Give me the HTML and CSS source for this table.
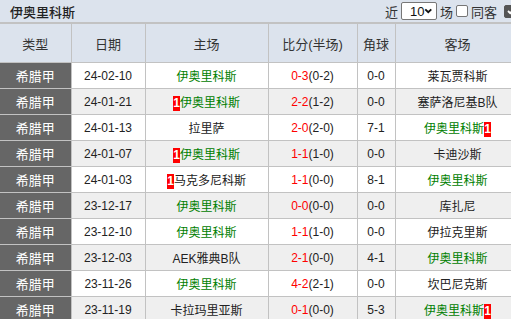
FILE: index.html
```html
<!DOCTYPE html>
<html lang="zh-CN">
<head>
<meta charset="utf-8">
<link rel="stylesheet" href="styles.css">
</head>
<body>
<div class="panel">
  <div class="titlebar">
    <span class="title">伊奥里科斯</span>
    <div class="controls">
      <span>近</span>
      <span class="sel">10<svg width="10" height="8" viewBox="0 0 10 8"><path d="M1.5 2 L5 5.5 L8.5 2" fill="none" stroke="#111" stroke-width="2.2"/></svg></span>
      <span>场</span>
      <span class="cb"></span>
      <span>同客</span>
      <span class="cb on"><svg width="10" height="10" viewBox="0 0 10 10"><path d="M2 5 L4.2 7.2 L8.2 2.8" fill="none" stroke="#fff" stroke-width="1.8"/></svg></span>
    </div>
  </div>
  <table class="tbl">
    <colgroup>
      <col class="c1"><col class="c2"><col class="c3"><col class="c4"><col class="c5"><col class="c6">
    </colgroup>
    <thead>
      <tr><th>类型</th><th>日期</th><th>主场</th><th>比分(半场)</th><th>角球</th><th>客场</th></tr>
    </thead>
    <tbody>
      <tr><td class="lg">希腊甲</td><td>24-02-10</td><td class="g">伊奥里科斯</td><td><span class="r">0-3</span>(0-2)</td><td>0-0</td><td>莱瓦贾科斯</td></tr>
      <tr class="alt"><td class="lg">希腊甲</td><td>24-01-21</td><td><span class="badge">1</span><span class="g">伊奥里科斯</span></td><td><span class="r">2-2</span>(1-2)</td><td>0-0</td><td>塞萨洛尼基B队</td></tr>
      <tr><td class="lg">希腊甲</td><td>24-01-13</td><td>拉里萨</td><td><span class="r">2-0</span>(2-0)</td><td>7-1</td><td><span class="g">伊奥里科斯</span><span class="badge">1</span></td></tr>
      <tr class="alt"><td class="lg">希腊甲</td><td>24-01-07</td><td><span class="badge">1</span><span class="g">伊奥里科斯</span></td><td><span class="r">1-1</span>(1-0)</td><td>0-0</td><td>卡迪沙斯</td></tr>
      <tr><td class="lg">希腊甲</td><td>24-01-03</td><td><span class="badge">1</span>马克多尼科斯</td><td><span class="r">1-1</span>(0-0)</td><td>8-1</td><td class="g">伊奥里科斯</td></tr>
      <tr class="alt"><td class="lg">希腊甲</td><td>23-12-17</td><td class="g">伊奥里科斯</td><td><span class="r">0-0</span>(0-0)</td><td>0-0</td><td>库扎尼</td></tr>
      <tr><td class="lg">希腊甲</td><td>23-12-10</td><td class="g">伊奥里科斯</td><td><span class="r">1-1</span>(1-0)</td><td>0-0</td><td>伊拉克里斯</td></tr>
      <tr class="alt"><td class="lg">希腊甲</td><td>23-12-03</td><td>AEK雅典B队</td><td><span class="r">2-1</span>(0-0)</td><td>4-1</td><td class="g">伊奥里科斯</td></tr>
      <tr><td class="lg">希腊甲</td><td>23-11-26</td><td class="g">伊奥里科斯</td><td><span class="r">4-2</span>(2-1)</td><td>0-0</td><td>坎巴尼克斯</td></tr>
      <tr class="alt"><td class="lg">希腊甲</td><td>23-11-19</td><td>卡拉玛里亚斯</td><td><span class="r">0-1</span>(0-0)</td><td>5-3</td><td><span class="g">伊奥里科斯</span><span class="badge">1</span></td></tr>
    </tbody>
  </table>
</div>
</body>
</html>
```
FILE: styles.css
```css
html, body {
  margin: 0;
  padding: 0;
  background: #fff;
  overflow: hidden;
}
body {
  font-family: "Liberation Sans", "Noto Sans CJK SC", sans-serif;
  font-size: 12px;
  color: #333;
}
.panel {
  width: 520px;
}
.titlebar {
  height: 23px;
  background: #dce3ed;
  display: flex;
  align-items: center;
  justify-content: space-between;
  border-bottom: 1px solid #c2c2c2;
  box-sizing: border-box;
}
.title {
  padding-left: 10px;
  font-size: 13px;
  font-weight: 500;
  color: #222;
}
.controls {
  display: flex;
  align-items: center;
  gap: 3px;
  font-size: 13px;
  color: #333;
  margin-right: 3px;
}
.sel {
  display: inline-flex;
  align-items: center;
  justify-content: space-between;
  box-sizing: border-box;
  width: 36px;
  height: 18px;
  border: 1px solid #777;
  border-radius: 2px;
  background: #fff;
  padding: 0 3px 0 8px;
  font-size: 13px;
  color: #111;
}
.cb {
  display: inline-flex;
  align-items: center;
  justify-content: center;
  box-sizing: border-box;
  width: 12px;
  height: 12px;
  border: 1px solid #767676;
  border-radius: 2px;
  background: #fff;
}
.cb.on {
  width: 13px;
  height: 13px;
  background: #555;
  border-color: #555;
  margin-left: 4px;
}
.tbl {
  border-collapse: collapse;
  table-layout: fixed;
  width: 520px;
}
.c1 { width: 71px; }
.c2 { width: 74px; }
.c3 { width: 123px; }
.c4 { width: 89px; }
.c5 { width: 38px; }
.c6 { width: 125px; }
.tbl th, .tbl td {
  border: 1px solid #c2c2c2;
  text-align: center;
  padding: 0;
  white-space: nowrap;
  overflow: hidden;
}
.tbl th:first-child, .tbl td:first-child {
  border-left: none;
}
.tbl th {
  height: 38px;
  background: #dce3ed;
  font-weight: normal;
  font-size: 13px;
  color: #333;
}
.tbl td {
  height: 25px;
  color: #222;
}
.tbl tr.alt td {
  background: #efefef;
}
.tbl td.lg, .tbl tr.alt td.lg {
  background: #666;
  color: #fff;
  font-size: 13px;
}
.tbl td.g, .g { color: #008000; }
.r { color: #f00; }
.badge {
  display: inline-block;
  background: #f00;
  color: #fff;
  font-weight: bold;
  font-size: 12px;
  line-height: 15px;
  width: 7px;
  text-align: center;
  vertical-align: 0;
}
```
